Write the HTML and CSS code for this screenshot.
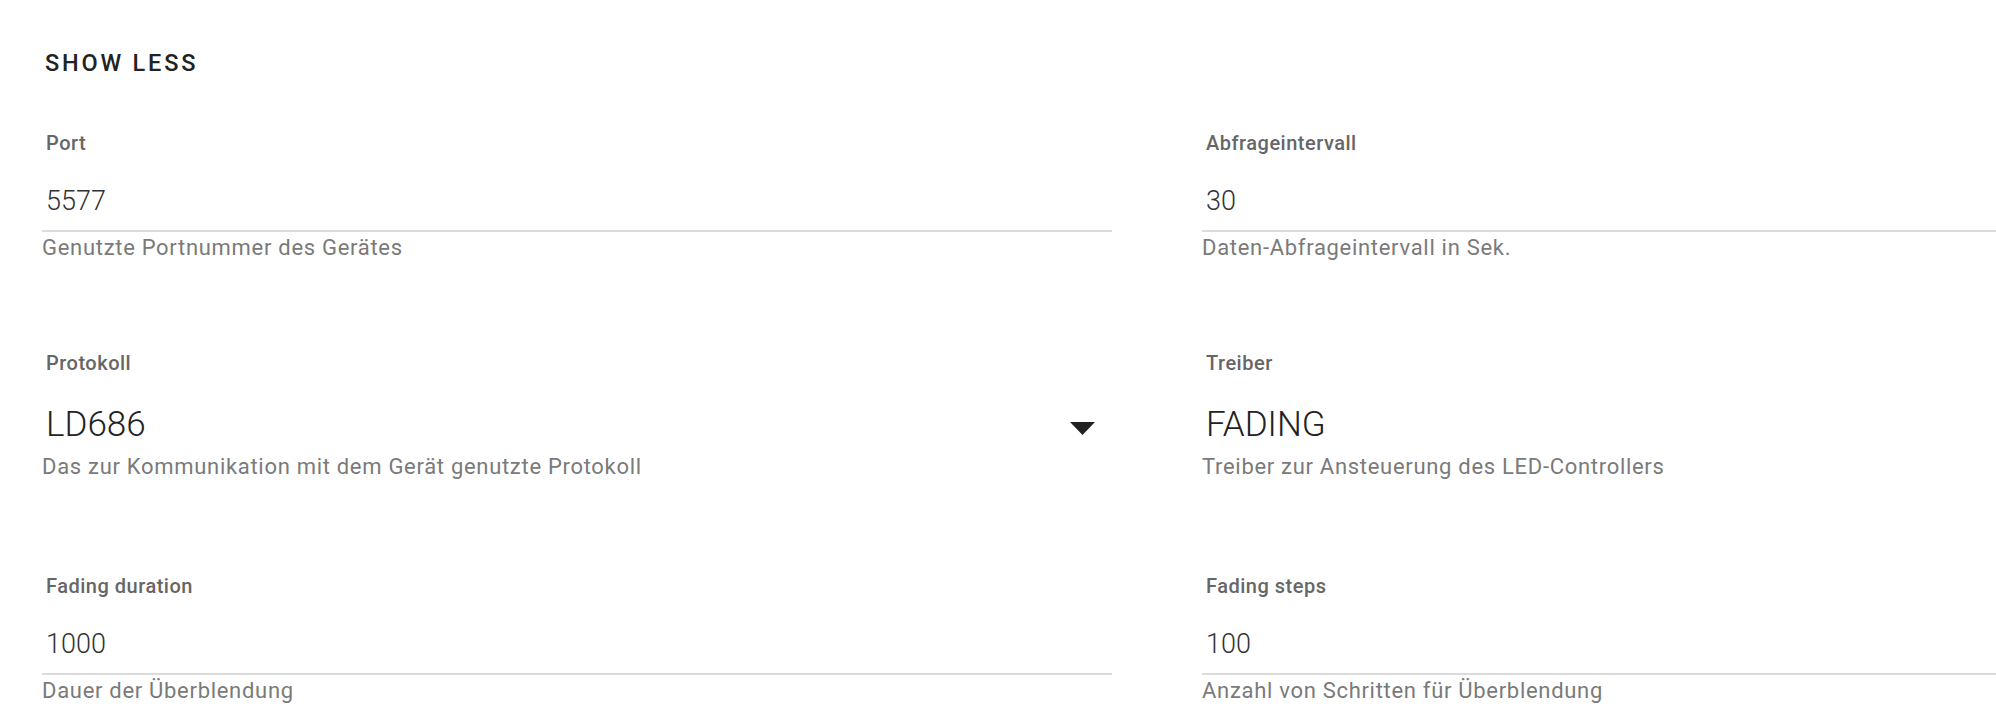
FILE: index.html
```html
<!DOCTYPE html>
<html lang="de">
<head>
<meta charset="utf-8">
<title>Einstellungen</title>
<link rel="stylesheet" href="styles.css">
</head>
<body>
<div class="page">
  <div class="toolbar">
    <button class="text-btn">SHOW LESS</button>
  </div>
  <div class="grid">
    <div class="field">
      <div class="label">Port</div>
      <div class="value">5577</div>
      <div class="underline"></div>
      <div class="helper">Genutzte Portnummer des Gerätes</div>
    </div>
    <div class="field">
      <div class="label">Abfrageintervall</div>
      <div class="value">30</div>
      <div class="underline"></div>
      <div class="helper">Daten-Abfrageintervall in Sek.</div>
    </div>
    <div class="field select">
      <div class="label">Protokoll</div>
      <div class="select-row">
        <div class="select-value">LD686</div>
        <svg class="arrow" width="25" height="13" viewBox="0 0 25 13"><polygon points="0,0 25,0 12.5,13" fill="#222"/></svg>
      </div>
      <div class="helper select-helper">Das zur Kommunikation mit dem Gerät genutzte Protokoll</div>
    </div>
    <div class="field select">
      <div class="label">Treiber</div>
      <div class="select-row">
        <div class="select-value">FADING</div>
      </div>
      <div class="helper select-helper">Treiber zur Ansteuerung des LED-Controllers</div>
    </div>
    <div class="field">
      <div class="label">Fading duration</div>
      <div class="value">1000</div>
      <div class="underline"></div>
      <div class="helper">Dauer der Überblendung</div>
    </div>
    <div class="field">
      <div class="label">Fading steps</div>
      <div class="value">100</div>
      <div class="underline"></div>
      <div class="helper">Anzahl von Schritten für Überblendung</div>
    </div>
  </div>
</div>
</body>
</html>
```
FILE: styles.css
```css
html, body {
  margin: 0;
  padding: 0;
  background: #ffffff;
  overflow: hidden;
  width: 1996px;
  height: 724px;
}

.page {
  font-family: Roboto, "Liberation Sans", sans-serif;
  padding-left: 42px;
  width: 1954px;
}

.toolbar {
  height: 131px;
  display: flex;
  align-items: flex-start;
}

.text-btn {
  margin-top: 49px;
  margin-left: 3px;
  padding: 0;
  border: 0;
  background: transparent;
  font-family: Roboto, "Liberation Sans", sans-serif;
  font-weight: 500;
  font-size: 23.5px;
  line-height: 28px;
  letter-spacing: 2.8px;
  color: #222222;
}

.grid {
  display: grid;
  grid-template-columns: 1070px 1fr;
  column-gap: 90px;
  row-gap: 90px;
}

.field {
  display: flex;
  flex-direction: column;
}

.label {
  padding-left: 4px;
  font-weight: 500;
  font-size: 20px;
  line-height: 24px;
  letter-spacing: 0.5px;
  color: #666666;
}

.value {
  margin-top: 30px;
  padding-left: 4px;
  font-weight: 300;
  font-size: 27px;
  line-height: 32px;
  color: #333333;
}

.underline {
  margin-top: 13px;
  height: 2px;
  background: #dcdcdc;
}

.helper {
  margin-top: 3px;
  font-size: 22px;
  line-height: 26px;
  letter-spacing: 0.7px;
  color: #7a7a7a;
}

.select {
  padding-bottom: 4px;
}

.select-row {
  margin-top: 30px;
  height: 40px;
  display: flex;
  align-items: center;
  justify-content: space-between;
  padding-left: 4px;
  padding-right: 17px;
}

.select-value {
  font-weight: 300;
  font-size: 35px;
  line-height: 40px;
  color: #222222;
}

.arrow {
  margin-top: 6px;
}

.select-helper {
  margin-top: 9px;
}
```
